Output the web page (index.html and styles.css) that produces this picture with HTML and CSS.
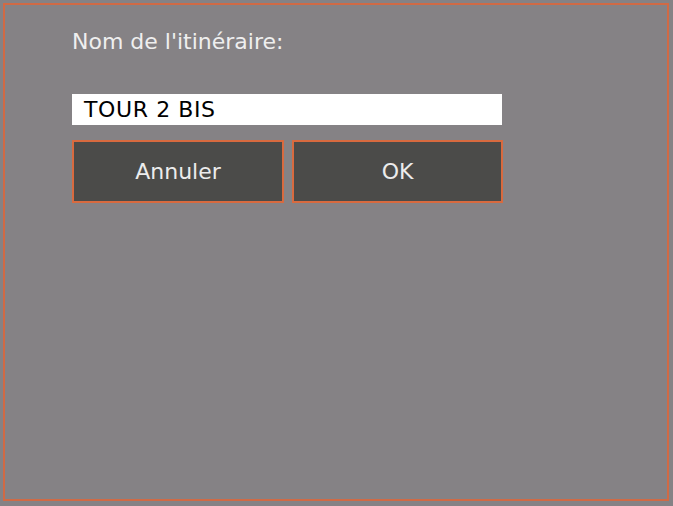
FILE: index.html
```html
<!DOCTYPE html>
<html lang="fr">
<head>
<meta charset="utf-8">
<title>Nom de l'itinéraire</title>
<link rel="stylesheet" href="styles.css">
</head>
<body>
<div class="frame">
  <div class="content">
    <div class="label">Nom de l'itinéraire:</div>
    <div class="field">TOUR 2 BIS</div>
    <div class="buttons">
      <div class="btn">Annuler</div>
      <div class="btn">OK</div>
    </div>
  </div>
</div>
</body>
</html>
```

FILE: styles.css
```css
html, body {
  margin: 0;
  padding: 0;
  background: #858285;
}
body {
  width: 673px;
  height: 506px;
  overflow: hidden;
  font-family: "DejaVu Sans", "Liberation Sans", sans-serif;
}
.frame {
  box-sizing: border-box;
  margin: 3px 0 0 3px;
  width: 666px;
  height: 498px;
  border: 2px solid #d06a45;
}
.content {
  padding: 24px 0 0 67px;
  width: 430px;
}
.label {
  font-size: 22px;
  line-height: 26px;
  color: #efefef;
}
.field {
  margin-top: 39px;
  height: 31px;
  line-height: 32px;
  background: #ffffff;
  color: #000;
  font-size: 22px;
  letter-spacing: 0.6px;
  padding-left: 12px;
  box-sizing: border-box;
  width: 430px;
}
.buttons {
  margin-top: 15px;
  display: grid;
  grid-template-columns: 212px 211px;
  column-gap: 8px;
}
.btn {
  box-sizing: border-box;
  height: 63px;
  border: 2px solid #d86a3f;
  background: #4b4b49;
  color: #ececec;
  font-size: 22px;
  display: flex;
  align-items: center;
  justify-content: center;
}
```
